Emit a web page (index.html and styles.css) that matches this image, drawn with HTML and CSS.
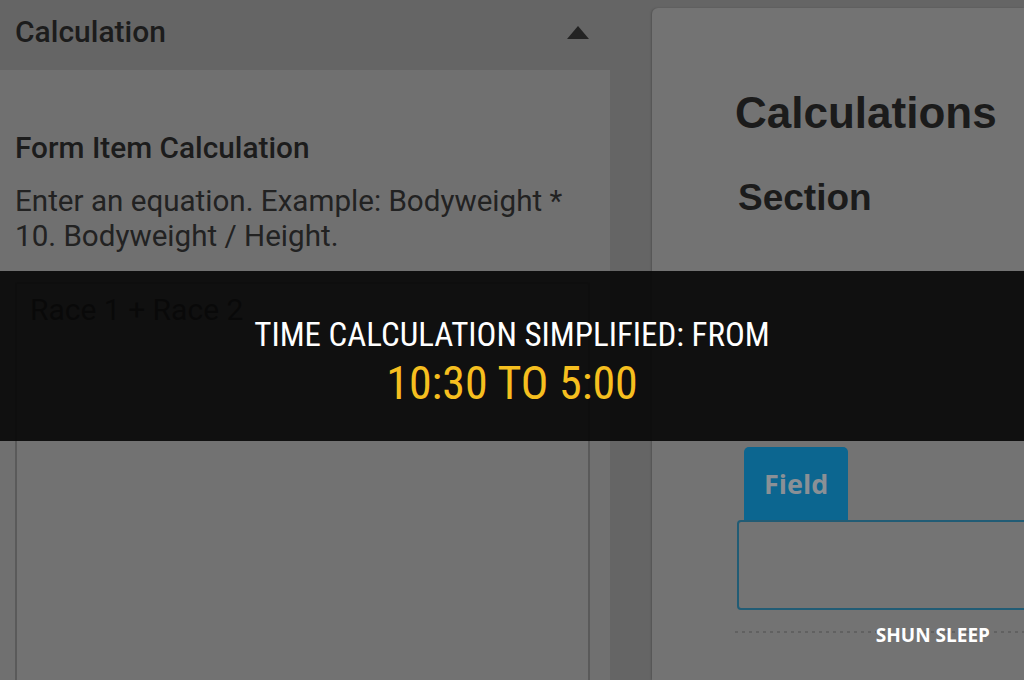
FILE: index.html
```html
<!DOCTYPE html>
<html lang="en">
<head>
<meta charset="utf-8">
<title>Time calculation simplified</title>
<link rel="stylesheet" href="styles.css">
</head>
<body>
<div class="hero">
  <div class="page">
    <section class="settings">
      <header class="settings-head">
        <span class="settings-title">Calculation</span>
        <svg class="caret" width="22" height="13" viewBox="0 0 22 13" aria-hidden="true">
          <path d="M11 0 L22 13 L0 13 Z" fill="#232323"/>
        </svg>
      </header>
      <div class="settings-body">
        <h2 class="field-title">Form Item Calculation</h2>
        <p class="field-help">Enter an equation. Example: Bodyweight * 10. Bodyweight / Height.</p>
        <div class="equation">Race 1 + Race 2</div>
      </div>
    </section>
    <div class="gutter"></div>
    <section class="canvas">
      <h1 class="canvas-title">Calculations</h1>
      <h3 class="canvas-sub">Section</h3>
      <div class="tab">Field</div>
      <div class="field-box"></div>
      <div class="dash"></div>
    </section>
  </div>

  <div class="banner">
    <div class="banner-line">TIME CALCULATION SIMPLIFIED: FROM</div>
    <div class="banner-accent">10:30 TO 5:00</div>
  </div>

  <div class="brand">SHUN SLEEP</div>
</div>
</body>
</html>
```

FILE: styles.css
```css
* {
  box-sizing: border-box;
}

html, body {
  margin: 0;
  padding: 0;
}

body {
  width: 1024px;
  height: 680px;
  overflow: hidden;
  background: #656565;
  font-family: Roboto, "Liberation Sans", sans-serif;
}

.hero {
  position: relative;
  width: 1024px;
  height: 680px;
  overflow: hidden;
}

.page {
  display: flex;
  height: 680px;
}

/* left settings column */
.settings {
  width: 610px;
  flex: none;
  display: flex;
  flex-direction: column;
}

.settings-head {
  height: 70px;
  flex: none;
  display: flex;
  justify-content: space-between;
  align-items: flex-start;
  padding: 14px 21px 0 15px;
}

.settings-title {
  font-size: 30px;
  font-weight: 500;
  line-height: 35px;
  color: #1c1c1c;
}

.caret {
  margin-top: 12px;
}

.settings-body {
  flex: 1;
  background: #707070;
  padding: 60px 20px 0 15px;
  display: flex;
  flex-direction: column;
}

.field-title {
  margin: 0;
  font-size: 29.8px;
  font-weight: 500;
  line-height: 35px;
  color: #1c1c1c;
}

.field-help {
  margin: 19px 0 0;
  font-size: 29.6px;
  font-weight: 400;
  line-height: 35px;
  color: #222222;
}

.equation {
  margin-top: 28px;
  flex: 1;
  border: 2px solid #5a5a5a;
  border-bottom: none;
  border-radius: 3px 3px 0 0;
  background: #727272;
  padding: 8px 13px;
  font-size: 30px;
  line-height: 35px;
  color: #1c1c1c;
}

.gutter {
  width: 42px;
  flex: none;
}

/* right form canvas */
.canvas {
  flex: 1;
  margin-top: 8px;
  background: #737373;
  border-top-left-radius: 6px;
  box-shadow: -1px 0 2px rgba(0, 0, 0, 0.18);
  padding: 79px 0 0 83px;
  display: flex;
  flex-direction: column;
  align-items: flex-start;
  overflow: hidden;
}

.canvas-title {
  margin: 0;
  font-family: "Liberation Sans", Arial, sans-serif;
  font-size: 44px;
  font-weight: 700;
  line-height: 52px;
  color: #1b1b1b;
}

.canvas-sub {
  margin: 37px 0 0 3px;
  font-family: "Liberation Sans", Arial, sans-serif;
  font-size: 37px;
  font-weight: 700;
  line-height: 44px;
  color: #1b1b1b;
}

.tab {
  margin: 227px 0 0 9px;
  height: 73px;
  padding: 0 20px;
  border-radius: 5px 5px 0 0;
  background: #0c6690;
  font-family: "Open Sans", "Noto Sans", sans-serif;
  font-size: 27px;
  font-weight: 700;
  line-height: 73px;
  color: #8a9096;
}

.field-box {
  margin-left: 2px;
  width: 400px;
  height: 90px;
  flex: none;
  border: 2px solid #215c75;
  border-radius: 4px;
  background: #747474;
}

.dash {
  margin-top: 21px;
  width: 400px;
  height: 2px;
  flex: none;
  background: repeating-linear-gradient(90deg, #616161 0 3px, transparent 3px 7px);
}

/* headline strip laid over the page */
.banner {
  position: absolute;
  left: 0;
  top: 271px;
  width: 1024px;
  height: 170px;
  background: rgba(8, 8, 8, 0.92);
  display: flex;
  flex-direction: column;
  align-items: center;
  padding-top: 44px;
  font-family: "Liberation Sans Narrow", "Roboto Condensed", "Liberation Sans", sans-serif;
}

.banner-line {
  font-size: 33px;
  line-height: 40px;
  color: #ffffff;
}

.banner-accent {
  margin-top: 2px;
  font-size: 46px;
  line-height: 52px;
  color: #f6bf1f;
}

.brand {
  position: absolute;
  right: 34px;
  top: 622px;
  font-family: "Open Sans", "Noto Sans", sans-serif;
  font-size: 19px;
  font-weight: 700;
  line-height: 26px;
  color: #ffffff;
}
```
